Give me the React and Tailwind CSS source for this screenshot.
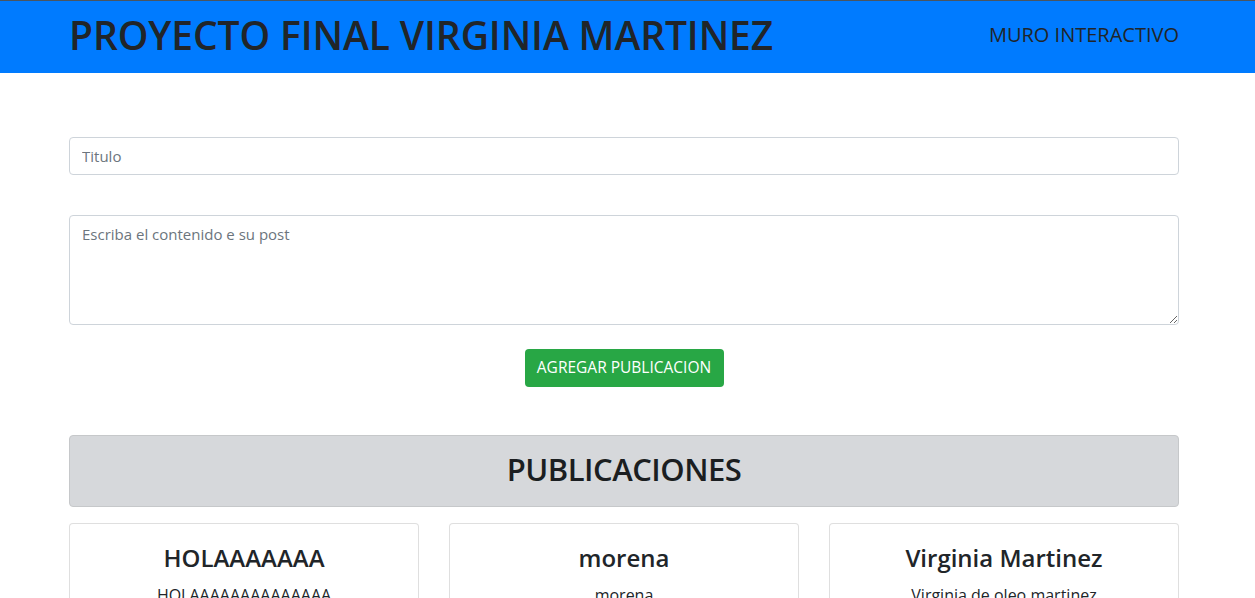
import React from "react";

const font = { fontFamily: '"Open Sans", "Noto Sans", "Liberation Sans", sans-serif' };

function Card({ title, body }) {
  return (
    <div className="border border-[rgba(0,0,0,0.125)] rounded-[4px] bg-white p-5 text-center text-[#212529]">
      <h3 className="text-[24px] leading-[1.2] font-semibold mb-[10px]">{title}</h3>
      <p className="text-[16px] leading-6">{body}</p>
    </div>
  );
}

export default function App() {
  return (
    <div className="min-h-[598px] bg-white text-[#212529]" style={font}>
      <header className="h-[73px] bg-[#007bff] border-t border-[#4a5560]">
        <div className="ml-[69px] w-[1110px] h-full flex items-center justify-between pb-1">
          <h1 className="text-[39px] leading-[48px] font-semibold tracking-[-0.1px] text-[#212529]">
            PROYECTO FINAL VIRGINIA MARTINEZ
          </h1>
          <span className="text-[20px] text-[#212529]">MURO INTERACTIVO</span>
        </div>
      </header>

      <main className="ml-[69px] w-[1110px] pt-[64px] flex flex-col">
        <input
          className="h-[38px] w-full border border-[#ced4da] rounded-[4px] px-3 text-[15px] placeholder:text-[#6c757d] outline-none"
          placeholder="Titulo"
        />
        <textarea
          className="mt-[40px] h-[110px] w-full border border-[#ced4da] rounded-[4px] px-3 py-[7px] text-[15px] placeholder:text-[#6c757d] outline-none resize-y"
          placeholder="Escriba el contenido e su post"
        />
        <div className="flex justify-center mt-[24px]">
          <button className="h-[38px] w-[199px] bg-[#28a745] text-white rounded-[4px] text-[15.5px]">
            AGREGAR PUBLICACION
          </button>
        </div>

        <div className="mt-[48px] h-[72px] bg-[#d6d8db] border border-[#c6c8ca] rounded-[4px] flex items-center justify-center">
          <h2 className="text-[31px] font-semibold text-[#1b1e21] tracking-[-0.5px] pb-[4px]">PUBLICACIONES</h2>
        </div>

        <div className="mt-4 grid grid-cols-3 gap-[30px]">
          <Card title="HOLAAAAAAA" body="HOLAAAAAAAAAAAAAA" />
          <Card title="morena" body="morena" />
          <Card title="Virginia Martinez" body="Virginia de oleo martinez" />
        </div>
      </main>
    </div>
  );
}
